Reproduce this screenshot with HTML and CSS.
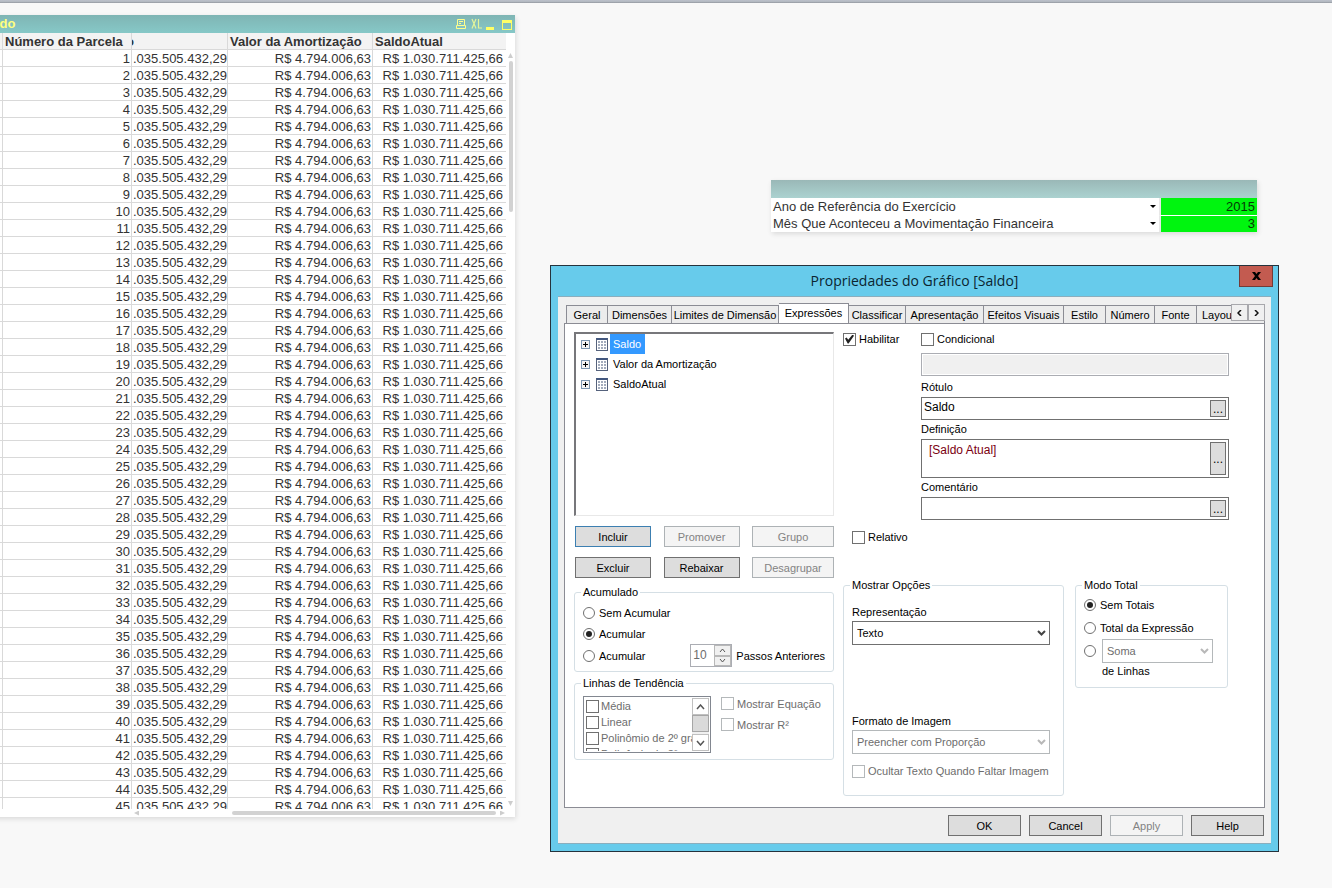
FILE: index.html
```html
<!DOCTYPE html>
<html lang="pt-BR">
<head>
<meta charset="utf-8">
<title>Propriedades do Gráfico [Saldo]</title>
<link rel="stylesheet" href="styles.css">
</head>
<body>
<main class="desktop">
  <div class="app-edge"></div>

  <section class="sheet-object chart">
    <header class="chart-title">
      <h2>Saldo</h2>
      <div class="chart-tools">
        <svg width="12" height="12" viewBox="0 0 12 12" fill="none" stroke="#ffff8c"><path d="M2.500 1.500h7v6h-7zM4 3.500h4M4 5.500h2M2.500 7.500h-1v3h9v-3h-1"/></svg>
        <svg width="11" height="12" viewBox="0 0 11 12" fill="none" stroke="#e4f59a" stroke-width="1.200"><path d="M1 1l4 9.500M5 1L1 10.500M7.500 1v9H11"/></svg>
        <svg width="8" height="12" viewBox="0 0 8 12"><path d="M0 9h8v3H0z" fill="#ffff66"/></svg>
        <svg width="10" height="12" viewBox="0 0 10 12"><path d="M0 2h10v10H0zM1 5v6h8V5z" fill="#ffff66" fill-rule="evenodd"/></svg>
      </div>
    </header>
    <div class="chart-body">
      <div class="table-clip">
        <table class="grid">
          <colgroup><col class="c-first"><col class="c-num"><col class="c-saldo"><col class="c-amort"><col class="c-atual"></colgroup>
          <thead>
            <tr><th></th><th>Número da Parcela</th><th><span class="scrolled">o</span></th><th>Valor da Amortização</th><th>SaldoAtual</th></tr>
          </thead>
          <tbody id="rows"></tbody>
        </table>
      </div>
      <div class="vbar"><i class="arrow up"></i><i class="vthumb"></i><i class="arrow down"></i></div>
    </div>
    <div class="hbar"><i class="arrow left"></i><i class="hthumb"></i><i class="arrow right"></i></div>
  </section>

  <section class="sheet-object params">
    <div class="params-title"></div>
    <div class="param"><span class="param-name">Ano de Referência do Exercício</span><i class="caret"></i><span class="param-value">2015</span></div>
    <div class="param"><span class="param-name">Mês Que Aconteceu a Movimentação Financeira</span><i class="caret"></i><span class="param-value">3</span></div>
  </section>

  <section class="dialog" role="dialog" aria-labelledby="dlg-title">
    <header class="dialog-title">
      <h1 id="dlg-title">Propriedades do Gráfico [Saldo]</h1>
      <button class="close" aria-label="Fechar"><svg width="9" height="8" viewBox="0 0 9 8"><path d="M0 0h3l1.500 2L6 0h3L6 4l3 4H6L4.500 6 3 8H0l3-4z"/></svg></button>
    </header>
    <div class="client">
      <div class="tabs" role="tablist">
        <button class="tab t42" role="tab">Geral</button>
        <button class="tab t64" role="tab">Dimensões</button>
        <button class="tab t107" role="tab">Limites de Dimensão</button>
        <button class="tab t70 active" role="tab" aria-selected="true">Expressões</button>
        <button class="tab t57" role="tab">Classificar</button>
        <button class="tab t78" role="tab">Apresentação</button>
        <button class="tab t80" role="tab">Efeitos Visuais</button>
        <button class="tab t42" role="tab">Estilo</button>
        <button class="tab t49" role="tab">Número</button>
        <button class="tab t42" role="tab">Fonte</button>
        <button class="tab last" role="tab">Layou</button>
        <div class="tab-scroll">
          <button aria-label="Anterior"><svg width="5" height="6" viewBox="0 0 5 6"><path d="M4 0L1 3l3 3"/></svg></button>
          <button aria-label="Próximo"><svg width="5" height="6" viewBox="0 0 5 6"><path d="M1 0l3 3-3 3"/></svg></button>
        </div>
      </div>

      <div class="page" role="tabpanel">
        <div class="col-left">
          <ul class="tree">
            <li><i class="plus"></i><i class="sheet"></i><span class="selected">Saldo</span></li>
            <li><i class="plus"></i><i class="sheet"></i><span>Valor da Amortização</span></li>
            <li><i class="plus"></i><i class="sheet"></i><span>SaldoAtual</span></li>
          </ul>
          <div class="commands">
            <button class="btn default">Incluir</button><button class="btn" disabled>Promover</button><button class="btn" disabled>Grupo</button>
            <button class="btn">Excluir</button><button class="btn">Rebaixar</button><button class="btn" disabled>Desagrupar</button>
          </div>
          <fieldset class="group accum">
            <legend>Acumulado</legend>
            <label class="opt"><input type="radio" name="acc">Sem Acumular</label>
            <label class="opt"><input type="radio" name="acc" checked>Acumular</label>
            <div class="accum-row">
              <label class="opt"><input type="radio" name="acc">Acumular</label>
              <div class="steps">
                <span class="spinner"><input id="steps" type="text" value="10" disabled><span class="spin-buttons"><button disabled aria-label="Mais"><svg width="7" height="4" viewBox="0 0 7 4"><path d="M1 4l2.500-3L6 4"/></svg></button><button disabled aria-label="Menos"><svg width="7" height="4" viewBox="0 0 7 4"><path d="M1 0l2.500 3L6 0"/></svg></button></span></span>
                <label for="steps">Passos Anteriores</label>
              </div>
            </div>
          </fieldset>
          <fieldset class="group trend">
            <legend>Linhas de Tendência</legend>
            <div class="trend-body">
              <div class="listbox">
                <div class="list-items">
                  <label><input type="checkbox">Média</label>
                  <label><input type="checkbox">Linear</label>
                  <label><input type="checkbox">Polinômio de 2º gra</label>
                  <label><input type="checkbox">Polinômio de 3º</label>
                </div>
                <div class="list-scroll">
                  <button aria-label="Subir"><svg width="9" height="6" viewBox="0 0 9 6"><path d="M1 5l3.500-4L8 5"/></svg></button>
                  <i></i>
                  <button aria-label="Descer"><svg width="9" height="6" viewBox="0 0 9 6"><path d="M1 1l3.500 4L8 1"/></svg></button>
                </div>
              </div>
              <div class="trend-checks">
                <label class="opt muted"><input type="checkbox" disabled>Mostrar Equação</label>
                <label class="opt muted"><input type="checkbox" disabled>Mostrar R²</label>
              </div>
            </div>
          </fieldset>
        </div>

        <div class="col-right">
          <div class="definition">
            <label class="opt enable"><input type="checkbox" checked>Habilitar</label>
            <div class="fields">
              <label class="opt"><input type="checkbox">Condicional</label>
              <input class="cond" type="text" disabled aria-label="Condicional">
              <label class="caption" for="rotulo">Rótulo</label>
              <div class="field"><input id="rotulo" type="text" value="Saldo"><button aria-label="Editar rótulo">...</button></div>
              <label class="caption" for="definicao">Definição</label>
              <div class="field tall"><textarea id="definicao">[Saldo Atual]</textarea><button aria-label="Editar definição">...</button></div>
              <label class="caption" for="comentario">Comentário</label>
              <div class="field"><input id="comentario" type="text"><button aria-label="Editar comentário">...</button></div>
            </div>
          </div>
          <label class="opt relative-opt"><input type="checkbox">Relativo</label>
          <div class="options">
            <fieldset class="group display">
              <legend>Mostrar Opções</legend>
              <label for="rep">Representação</label>
              <select id="rep"><option>Texto</option></select>
              <label class="fmt" for="fmt">Formato de Imagem</label>
              <select id="fmt" disabled><option>Preencher com Proporção</option></select>
              <label class="opt muted hide-text"><input type="checkbox" disabled>Ocultar Texto Quando Faltar Imagem</label>
            </fieldset>
            <fieldset class="group total">
              <legend>Modo Total</legend>
              <label class="opt"><input type="radio" name="total" checked>Sem Totais</label>
              <label class="opt"><input type="radio" name="total">Total da Expressão</label>
              <div class="total-row"><input type="radio" name="total" id="lines" aria-label="Linhas"><select disabled aria-label="Função"><option>Soma</option></select></div>
              <label class="of-lines" for="lines">de Linhas</label>
            </fieldset>
          </div>
        </div>
      </div>

      <footer class="actions">
        <button class="btn">OK</button><button class="btn">Cancel</button><button class="btn" disabled>Apply</button><button class="btn">Help</button>
      </footer>
    </div>
  </section>
</main>
<script src="rows.js"></script>
</body>
</html>
```
FILE: styles.css
```css
* { box-sizing: border-box; }
body { margin: 0; background: #f8f8f8; font: 11px/14px "Liberation Sans", Arial, sans-serif; color: #000; }
h1, h2, ul { margin: 0; padding: 0; font-weight: normal; list-style: none; }
button, input, select, textarea { font: inherit; color: inherit; margin: 0; padding: 0; border-radius: 0; }
svg { display: block; }
i { display: block; font-style: normal; }

.desktop { position: relative; min-height: 100vh; overflow: hidden; }
.app-edge { height: 3px; background: linear-gradient(#bcc1cb, #b4bac2 50%, #92979f); }

/* sheet objects */
.sheet-object { position: absolute; background: #fff; box-shadow: 1px 2px 5px #0000001f; font-size: 13px; color: #333; }
.chart { left: -24px; top: 15px; width: 539px; }
.chart-title { display: flex; justify-content: space-between; align-items: center; height: 18px; padding: 0 3px 0 4px; background: linear-gradient(#7fb5b4, #86c8c7); }
.chart-title h2 { font-size: 13px; font-weight: bold; color: #ffff80; }
.chart-tools { display: flex; gap: 4px; }
.chart-tools svg:last-child { margin-left: 4px; }
.chart-body { display: flex; height: 776px; }
.table-clip { flex: 1; overflow: hidden; }
.grid { width: 100%; table-layout: fixed; border-spacing: 0; line-height: 14px; }
.grid th, .grid td { height: 17px; padding: 2px 1px 0 1px; border-right: 1px solid #d9d9d9; border-bottom: 1px solid #d9d9d9; white-space: nowrap; }
.grid th { background: #f3f3f3; text-align: left; padding: 2px 0 0 2px; }
.grid td { text-align: right; }
.grid th:last-child, .grid td:last-child { border-right: 0; }
.grid td:last-child { padding-right: 3px; }
.grid th:nth-child(3) { padding-left: 0; }
.grid .scrolled { display: flex; justify-content: flex-end; width: 2px; overflow: hidden; }
.c-first { width: 27px; }
.c-num { width: 129px; }
.c-saldo { width: 96px; }
.c-amort { width: 145px; }
.vbar { width: 9px; display: flex; flex-direction: column; align-items: center; padding: 20px 0 3px; }
.vthumb { width: 4px; height: 151px; margin: 3px 0 auto; background: #d2d2d2; border-radius: 2px; }
.hbar { height: 8px; display: flex; align-items: center; padding: 0 10px 0 158px; }
.hthumb { width: 264px; height: 4px; margin: 0 4px 0 auto; background: #d2d2d2; border-radius: 2px; }
.arrow { width: 5px; height: 5px; background: #cdcdcd; }
.up { clip-path: polygon(50% 0, 100% 100%, 0 100%); }
.down { clip-path: polygon(0 0, 100% 0, 50% 100%); }
.left { clip-path: polygon(0 50%, 100% 0, 100% 100%); }
.right { clip-path: polygon(0 0, 100% 50%, 0 100%); }

.params { left: 771px; top: 180px; width: 486px; }
.params-title { height: 18px; background: linear-gradient(#9ab8b7, #abd2d0); }
.param { display: flex; align-items: center; height: 17px; line-height: 17px; }
.param-name { flex: 1; padding-left: 2px; }
.caret { width: 6px; height: 3px; margin-right: 3px; background: #000; clip-path: polygon(0 0, 100% 0, 50% 100%); }
.param-value { width: 98px; padding-right: 2px; border-left: 2px solid #e8e8e8; background: #00f50f; color: #063806; text-align: right; }
.param + .param .param-value { border-top: 1px solid #fff; line-height: 16px; }

/* dialog window */
.dialog { position: absolute; left: 550px; top: 265px; width: 729px; padding: 0 7px 7px; border: 1px solid #25333d; background: #67cbeb; }
.dialog-title { position: relative; height: 30px; display: flex; align-items: center; justify-content: center; }
.dialog-title h1 { font: 14px/20px "Open Sans", "Noto Sans", sans-serif; color: #0b2530; }
.close { position: absolute; top: 0; right: -2px; width: 34px; height: 21px; display: grid; place-items: center; border: 1px solid #743b37; border-top: 0; background: #c35b50; }
.client { padding: 6px 6px 7px; border-top: 1px solid #8baebd; border-bottom: 1px solid #8baebd; background: #f0f0f0; }

.tabs { position: relative; display: flex; align-items: flex-end; height: 20px; padding-left: 2px; overflow: hidden; }
.tab { flex: none; height: 18px; border: 1px solid #8b8c94; border-width: 1px 1px 0 0; background: #ececec; text-align: center; white-space: nowrap; overflow: hidden; }
.tab:first-child { border-left-width: 1px; }
.t42 { width: 42px; } .t49 { width: 49px; } .t57 { width: 57px; } .t64 { width: 64px; } .t70 { width: 70px; } .t78 { width: 78px; } .t80 { width: 80px; } .t107 { width: 107px; }
.tab.active { height: 20px; padding-bottom: 2px; background: #fff; }
.tab.last { flex: 1; padding-left: 5px; text-align: left; }
.tab-scroll { position: absolute; right: 0; top: 1px; display: flex; }
.tab-scroll button { width: 17px; height: 17px; display: grid; place-items: center; border: 1px solid #a8a8ac; background: #f0f0f0; }
.tab-scroll path { fill: none; stroke: #111; stroke-width: 1.5; }

.page { display: flex; gap: 9px; height: 485px; padding: 8px 35px 0 9px; border: 1px solid #8b8c94; background: #fff; }
.col-left { width: 260px; }
.col-right { flex: 1; }

.tree { height: 184px; padding: 0 0 0 5px; border: 1px solid #e8e8e8; border-top: 2px solid #77777b; border-left: 2px solid #77777b; }
.tree li { display: flex; align-items: center; height: 20px; }
.tree span { padding: 3px; line-height: 14px; }
.tree .selected { padding-right: 4px; background: #3399ff; color: #fff; }
.plus { width: 9px; height: 9px; margin-right: 6px; border: 1px solid #7d97b2; background: linear-gradient(#000, #000) center / 5px 1px no-repeat, linear-gradient(#000, #000) center / 1px 5px no-repeat, #f4f4f4; }
.sheet { width: 12px; height: 13px; margin-right: 2px; border: 1px solid #55627c; border-top: 2px solid #42577f; background: linear-gradient(#fff 1px, transparent 1px) 0 0 / 3px 3px, linear-gradient(90deg, #fff 1px, #a3acbd 1px) 0 0 / 3px 3px; }

.btn { height: 21px; border: 1px solid #707070; background: #dddddd; }
.btn.default { border-color: #3c7fb1; }
.btn:disabled { border-color: #adb2b5; background: #f4f4f4; color: #838383; }
.commands { display: grid; grid-template-columns: 76px 76px 82px; justify-content: space-between; gap: 10px 0; padding: 10px 0 7px 1px; }

.group { margin: 0; min-width: 0; border: 1px solid #d5dfe5; border-radius: 3px; padding: 0 8px; }
.group legend { padding: 0 2px; margin-left: -2px; }
.opt { display: flex; align-items: center; gap: 3px; white-space: nowrap; }
.muted { color: #6d6d6d; }
input[type="radio"], input[type="checkbox"] { appearance: none; flex: none; width: 13px; height: 13px; border: 1px solid #707070; background: #fff; display: grid; place-items: center; }
input[type="radio"] { width: 12px; height: 12px; border-radius: 50%; }
input[type="radio"]:checked::before { content: ""; width: 6px; height: 6px; border-radius: 50%; background: #222; }
input[type="checkbox"]:checked::before { content: ""; width: 9px; height: 9px; background: #222; clip-path: polygon(0 45%, 18% 32%, 36% 58%, 84% 0, 100% 14%, 40% 100%, 30% 100%); }
input[type="checkbox"]:disabled { border-color: #b4b8ba; }

.accum { padding-top: 3px; padding-bottom: 4px; }
.accum .opt { height: 21px; gap: 4px; }
.accum-row { display: flex; justify-content: space-between; align-items: center; height: 23px; }
.steps { display: flex; align-items: center; gap: 4px; }
.spinner { display: flex; width: 42px; height: 23px; border: 1px solid #abadb3; }
.spinner input { flex: 1; min-width: 0; padding: 0 0 2px 2px; border: 0; background: #fff; color: #6d6d6d; font-size: 12px; }
.spin-buttons { display: flex; flex-direction: column; width: 17px; }
.spin-buttons button { flex: 1; display: grid; place-items: center; border: 1px solid #b8b8b8; background: #f0f0f0; }
.spin-buttons path, .list-scroll path { fill: none; stroke: #555; }

.trend { margin-top: 4px; padding-top: 6px; padding-bottom: 6px; }
.trend-body { display: flex; gap: 10px; }
.listbox { display: flex; width: 128px; height: 57px; padding: 1px; border: 1px solid #828790; }
.list-items { flex: 1; overflow: hidden; padding-left: 1px; }
.list-items label { display: flex; align-items: center; gap: 2px; height: 16px; white-space: nowrap; color: #6d6d6d; }
.list-scroll { width: 17px; display: flex; flex-direction: column; background: #f0f0f0; }
.list-scroll button { height: 17px; display: grid; place-items: center; border: 1px solid #c0c0c0; background: #fff; }
.list-scroll i { flex: 1; margin-bottom: 2px; border: 1px solid #a6a6a6; background: #dadada; }
.list-scroll path { stroke-width: 1.500; }
.trend-checks .opt { height: 21px; }
.trend-checks { margin-top: -3px; }

.definition { display: flex; }
.enable { width: 78px; height: 14px; }
.fields { flex: 1; display: flex; flex-direction: column; }
.fields .opt { height: 14px; }
.cond { height: 23px; margin: 7px 0 2px; border: 1px solid #abadb3; background: #f0f0f0; box-shadow: inset 0 0 0 1px #fff; }
.caption { line-height: 19px; }
.field { display: flex; height: 23px; padding: 2px; border: 1px solid #707070; font-size: 12px; }
.field.tall { height: 39px; }
.field input, .field textarea { flex: 1; min-width: 0; border: 0; outline: 0; resize: none; background: none; line-height: 15px; }
.field input { padding: 0 0 3px; }
.field textarea { padding: 1px 5px; color: #7b0010; overflow: hidden; }
.field button { width: 16px; border: 1px solid #707070; background: #dddddd; line-height: 12px; }
.relative-opt { height: 14px; margin: 10px 0 34px 9px; }

.options { display: flex; align-items: flex-start; justify-content: space-between; padding-right: 1px; }
.display { width: 221px; padding: 13px 13px 17px 8px; display: flex; flex-direction: column; }
.display > label, .display > select { display: flex; }
select { appearance: none; width: 100%; height: 24px; padding: 0 4px; border: 1px solid #707070; background: #fff url("data:image/svg+xml,%3Csvg xmlns='http://www.w3.org/2000/svg' width='9' height='6'%3E%3Cpath d='M1 1l3.500 3.500L8 1' fill='none' stroke='%23444' stroke-width='2'/%3E%3C/svg%3E") right 3px center no-repeat; }
select:disabled { border-color: #b4b8ba; color: #6d6d6d; opacity: 1; background-image: url("data:image/svg+xml,%3Csvg xmlns='http://www.w3.org/2000/svg' width='9' height='6'%3E%3Cpath d='M1 1l3.500 3.500L8 1' fill='none' stroke='%23b8b8b8' stroke-width='2'/%3E%3C/svg%3E"); }
.display select { margin-top: 2px; }
.display .fmt { margin-top: 69px; }
.display .hide-text { height: 14px; margin-top: 10px; }
.total { width: 153px; padding: 1px 14px 7px 8px; }
.total .opt { height: 23px; gap: 4px; }
.total-row { display: flex; align-items: center; gap: 6px; }
.of-lines { display: block; margin-left: 18px; line-height: 17px; }

.actions { display: flex; justify-content: flex-end; gap: 8px; padding: 7px 1px 0 0; }
.actions .btn { width: 73px; }
```
FILE: rows.js
```js
const rows = document.getElementById("rows");
for (let n = 1; n <= 45; n++) {
  const tr = rows.insertRow();
  ["", n, ".035.505.432,29", "R$ 4.794.006,63", "R$ 1.030.711.425,66"].forEach((text) => {
    tr.insertCell().textContent = text;
  });
}
```
